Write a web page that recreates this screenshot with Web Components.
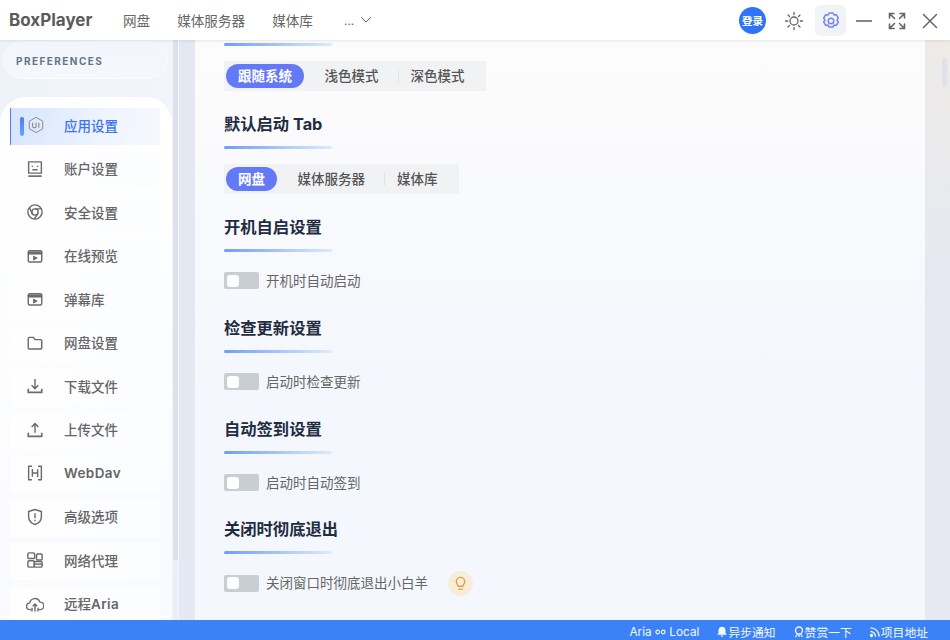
<!DOCTYPE html>
<html lang="zh">
<head>
<meta charset="utf-8">
<title>BoxPlayer</title>
<style>
  html, body { margin: 0; height: 100%; }
  body { font-family: Inter, "Noto Sans CJK SC", sans-serif; overflow: hidden; }
</style>
</head>
<body>
<bp-app></bp-app>
<script>
const ICONS = {
  ui: '<path d="M12 1.800l9 5.100v10.200l-9 5.100-9-5.100V6.900z"/><path d="M7.500 9v4.500a2.300 2.300 0 0 0 4.600 0V9M15.800 9v6.700" stroke-width="1.400"/>',
  account: '<rect x="3.500" y="2.500" width="17" height="15"/><path d="M3 21.500h18" stroke-width="2.200"/><path d="M8.500 7.500v1.800M15.500 7.500v1.800M8.500 13h7"/>',
  security: '<circle cx="12" cy="12" r="9.500"/><circle cx="12" cy="12" r="4.200"/><path d="M12 7.800h9M8.300 14.200L4.500 6M15.700 14.200L11 21.500"/>',
  preview: '<rect x="3" y="5" width="18" height="15" rx="2"/><path d="M3 6.500h18v3H3z" fill="currentColor" stroke-width="1"/><path d="M10 12l5 2.800-5 2.800z" fill="currentColor" stroke-width="1"/>',
  folder: '<path d="M3 6a1.500 1.500 0 0 1 1.500-1.500h5.500l2 3h7.500A1.500 1.500 0 0 1 21 9v9.500a1.500 1.500 0 0 1-1.500 1.500h-15A1.500 1.500 0 0 1 3 18.500z"/>',
  download: '<path d="M12 2.500v12.500M7.500 11l4.500 4.500 4.500-4.500"/><path d="M3 15.500v5h18v-5" stroke-width="2.200"/>',
  upload: '<path d="M12 15.500V3.500M7.500 8L12 3.500 16.500 8"/><path d="M3 15.500v5h18v-5" stroke-width="2.200"/>',
  webdav: '<path d="M8 3H3.500v18H8M16 3h4.500v18H16"/><path d="M8.500 6.500V17M15.500 7v10.500M8.500 12h7"/>',
  shield: '<path d="M12 2l8.500 2.700v7.300c0 5-3.500 8.300-8.500 10-5-1.700-8.500-5-8.500-10V4.700z"/><path d="M12 7v6.500M12 15.800v1.700"/>',
  proxy: '<rect x="2.500" y="2.500" width="9" height="7.500" rx="1.500"/><rect x="14" y="4" width="7.500" height="8" rx="1.500"/><rect x="2.500" y="13" width="8.500" height="8.500" rx="1.500"/><rect x="11" y="14" width="10.500" height="7.500" rx="2"/><path d="M11 17.500h10.500"/>',
  cloud: '<path d="M7 19.500H5.500a4.500 4.500 0 0 1-.5-9A7 7 0 0 1 18.500 9.500a5 5 0 0 1 .5 10h-2"/><path d="M12 22v-10M9 15l3-3 3 3M8 22v-5M16 22v-5"/>'
};

class BpTitlebar extends HTMLElement {
  constructor() {
    super();
    this.attachShadow({ mode: 'open' });
    this.shadowRoot.innerHTML = `
      <style>
        :host { display: flex; align-items: center; height: 40px; background: #fff; padding-left: 9px; color: #666; position: relative; z-index: 2; box-shadow: 0 1px 3px rgba(120,130,150,.18); }
        .logo { font-size: 17px; font-weight: 700; color: #5b5b5b; width: 114px; }
        nav { display: flex; align-items: center; font-size: 13.600px; }
        nav span { margin-right: 27px; white-space: nowrap; }
        nav .more { margin-left: 4px; margin-right: 6px; font-size: 12px; }
        .right { margin-left: auto; display: flex; align-items: center; padding-right: 4px; }
        .login { width: 27px; height: 27px; border-radius: 50%; background: #2f73f6; color: #fff; font-size: 10.500px; font-weight: 700; display: flex; align-items: center; justify-content: center; margin-right: 11px; }
        .btn { width: 33px; height: 31px; display: flex; align-items: center; justify-content: center; margin-top: 1px; }
        .sun { margin-right: 4px; }
        .btn.on { width: 31px; margin: 1px 1px 0; background: #f2f3f7; border-radius: 6px; color: #6f85f6; }
        svg { display: block; fill: none; stroke: currentColor; stroke-linecap: round; }
      </style>
      <span class="logo">BoxPlayer</span>
      <nav>
        <span>网盘</span><span>媒体服务器</span><span>媒体库</span>
        <span class="more">...</span>
        <svg width="12" height="8" viewBox="0 0 12 8" stroke-width="1"><path d="M1.500 1.500L6 6l4.500-4.500"/></svg>
      </nav>
      <div class="right">
        <div class="login">登录</div>
        <div class="btn sun"><svg width="20" height="20" viewBox="0 0 20 20" stroke-width="1.300"><circle cx="10" cy="10" r="4"/><path d="M10 1.500v2.200M10 16.300v2.200M1.500 10h2.200M16.300 10h2.200M4 4l1.500 1.500M14.500 14.500L16 16M4 16l1.500-1.500M14.500 5.500L16 4"/></svg></div>
        <div class="btn on"><svg width="20" height="20" viewBox="0 0 20 20" stroke-width="1.500"><path d="M8 2h4l1 2 2.300-.3 2 3.400-1.300 2 1.300 1.900-2 3.400-2.300-.3-1 2H8l-1-2-2.300.3-2-3.400L4 9.100l-1.300-2 2-3.400L7 4z" stroke-linejoin="round"/><circle cx="10" cy="10" r="2.800"/></svg></div>
        <div class="btn"><svg width="18" height="18" viewBox="0 0 18 18" stroke-width="1.600"><path d="M1 9h16" stroke-linecap="butt"/></svg></div>
        <div class="btn"><svg width="18" height="18" viewBox="0 0 18 18" stroke-width="1.600" stroke-linecap="butt"><path d="M1.500 6V1.500H6M2 2l4.500 4.500M16.500 6V1.500H12M16 2l-4.500 4.500M1.500 12v4.500H6M2 16l4.500-4.500M16.500 12v4.500H12M16 16l-4.500-4.500"/></svg></div>
        <div class="btn"><svg width="18" height="18" viewBox="0 0 18 18" stroke-width="1.500"><path d="M2.500 2.500l13 13M15.500 2.500l-13 13"/></svg></div>
      </div>`;
  }
}

class BpNavItem extends HTMLElement {
  constructor() {
    super();
    this.attachShadow({ mode: 'open' });
  }
  connectedCallback() {
    const icon = this.getAttribute('icon');
    this.shadowRoot.innerHTML = `
      <style>
        :host { display: flex; align-items: center; height: 37px; margin: 0 12px 6.500px 10px; color: #666; font-size: 13.500px; font-weight: 500; box-sizing: border-box; position: relative; background: linear-gradient(90deg, #fefeff, #fcfdff); }
        :host([active]) { color: #3f73ee; background: linear-gradient(100deg, #d6e5fd, #eef4fe 60%, #f6f9fe); border-left: 1px solid #5b7cf5; }
        .bar { display: none; width: 4px; height: 19px; border-radius: 2px; background: linear-gradient(#4f7df5, #66a6fb); position: absolute; left: 9px; top: 9px; }
        :host([active]) .bar { display: block; }
        svg { position: absolute; left: 15.500px; top: 8px; width: 18px; height: 18px; fill: none; stroke: #6b6b6b; stroke-width: 1.900; stroke-linejoin: round; color: #6b6b6b; }
        :host([active]) svg { left: 15.500px; top: 7.500px; stroke: #8a8a8a; stroke-width: 1.300; }
        .label { margin-left: 54px; padding-bottom: 4px; }
        :host([active]) .label { margin-left: 53px; }
        ::slotted(b) { font-weight: 600; letter-spacing: .4px; }
      </style>
      <span class="bar"></span>
      <svg viewBox="0 0 24 24">${ICONS[icon] || ''}</svg>
      <span class="label"><slot></slot></span>`;
  }
}

class BpSidebar extends HTMLElement {
  constructor() {
    super();
    this.attachShadow({ mode: 'open' });
    this.shadowRoot.innerHTML = `
      <style>
        :host { display: block; width: 195px; flex: none; position: relative; overflow: hidden; background: linear-gradient(90deg, #eef2f9, #f2f5fb 90%); }
        .pill { margin: 2px 0 0 3px; width: 165px; height: 37px; box-sizing: border-box; border-radius: 19px; background: linear-gradient(180deg, #f2f5fb, #f6f8fd); border: 1px solid #f9fbff; color: #64748b; font-size: 10px; font-weight: 700; letter-spacing: 1.450px; display: flex; align-items: center; padding-left: 12px; }
        .card { margin-top: 18px; width: 172px; border-radius: 26px 26px 0 0; background: linear-gradient(180deg, #fff, #f8fafe); padding-top: 11px; height: 560px; box-sizing: border-box; }
        .track { position: absolute; left: 173px; top: 0; bottom: 0; width: 5px; background: #eceef5; }
        .thumb { position: absolute; left: 173px; top: 0; height: 520px; width: 5px; background: #dee1e9; }
        .gutter { position: absolute; left: 179px; top: 0; bottom: 0; width: 16px; background: #e3e8f2; }
      </style>
      <div class="pill">PREFERENCES</div>
      <div class="card"><slot></slot></div>
      <div class="track"></div><div class="thumb"></div><div class="gutter"></div>`;
  }
}

class BpSegment extends HTMLElement {
  constructor() {
    super();
    this.attachShadow({ mode: 'open' });
  }
  connectedCallback() {
    const items = this.getAttribute('items').split(',');
    this.shadowRoot.innerHTML = `
      <style>
        :host { display: flex; width: fit-content; align-items: center; height: 30px; background: #f1f2f4; padding: 0 2px; color: #555; font-size: 13.500px; font-weight: 500; }
        span { box-sizing: border-box; height: 24.500px; display: flex; align-items: center; white-space: nowrap; position: relative; padding: 0 19px 2px 13px; }
        .pill { background: #6479f5; color: #fff; border-radius: 13px; font-weight: 700; padding: 0 12px 2px; margin-right: 8px; }
        .pill + span { padding-left: 12.500px; }
        span + span + span::before { content: ""; position: absolute; left: 0; top: 6px; height: 13px; width: 1px; background: #e2e3e6; }
      </style>
      ${items.map((t, i) => `<span${i === 0 ? ' class="pill"' : ''}>${t}</span>`).join('')}`;
  }
}

class BpSwitch extends HTMLElement {
  constructor() {
    super();
    this.attachShadow({ mode: 'open' });
    this.shadowRoot.innerHTML = `
      <style>
        :host { display: flex; align-items: center; height: 28px; color: #666; font-size: 13.500px; }
        .sw { width: 35px; height: 17px; border-radius: 2px; background: #c9cdd4; position: relative; margin-right: 7px; flex: none; }
        .sw::after { content: ""; position: absolute; left: 3px; top: 2.500px; width: 12px; height: 12px; border-radius: 3px; background: #fff; }
        .t { padding-bottom: 2px; }
        .extra { margin-left: 20px; display: flex; }
      </style>
      <span class="sw"></span><span class="t"><slot name="label"></slot></span><span class="extra"><slot></slot></span>`;
  }
}

class BpSection extends HTMLElement {
  constructor() {
    super();
    this.attachShadow({ mode: 'open' });
  }
  connectedCallback() {
    this.shadowRoot.innerHTML = `
      <style>
        :host { display: block; margin-bottom: 21.900px; }
        h3 { margin: 0; font-size: 16.300px; line-height: 22px; font-weight: 700; color: #222c40; }
        .rule { height: 3px; width: 108px; border-radius: 2px; background: linear-gradient(90deg, #6f9ff5, #dcebfd); margin: 11px 0 15px; }
        :host([flush]) h3 { display: none; }
        :host([flush]) .rule { margin-top: 0; }
      </style>
      <h3>${this.getAttribute('title') || ''}</h3>
      <div class="rule"></div>
      <slot></slot>`;
  }
}

class BpStatusbar extends HTMLElement {
  constructor() {
    super();
    this.attachShadow({ mode: 'open' });
    this.shadowRoot.innerHTML = `
      <style>
        :host { display: flex; justify-content: flex-end; align-items: center; height: 20px; box-sizing: border-box; padding: 3px 22px 0 0; background: #3b82f6; color: #f4f8ff; font-size: 11.800px; position: relative; z-index: 2; }
        span { display: flex; align-items: center; margin-left: 17px; white-space: nowrap; }
        svg { width: 12px; height: 12px; display: block; fill: none; stroke: currentColor; }
      </style>
      <span>Aria&nbsp;<svg viewBox="0 0 12 12" stroke-width="1.200" style="width:11px"><circle cx="3" cy="6" r="2"/><circle cx="9" cy="6" r="2"/></svg>&nbsp;Local</span>
      <span><svg viewBox="0 0 12 12" style="fill:currentColor;stroke:none"><path d="M6 .800c2.200 0 3.500 1.700 3.500 3.700v2.500l1.300 1.700H1.200L2.500 7V4.500C2.500 2.500 3.800.800 6 .800zM4.700 9.500h2.600a1.300 1.300 0 0 1-2.600 0z"/></svg>异步通知</span>
      <span><svg viewBox="0 0 12 12" stroke-width="1.300"><circle cx="6" cy="4.500" r="3.500"/><path d="M2.500 11l2-3M9.500 11l-2-3M6 8v3"/></svg>赞赏一下</span>
      <span><svg viewBox="0 0 12 12" stroke-width="1.300"><path d="M1.500 1.800a8.700 8.700 0 0 1 8.700 8.700M1.500 5.500a5 5 0 0 1 5 5"/><circle cx="2.500" cy="9.500" r="1" fill="currentColor"/></svg>项目地址</span>`;
  }
}

class BpSettings extends HTMLElement {
  constructor() {
    super();
    this.attachShadow({ mode: 'open' });
    this.shadowRoot.innerHTML = `
      <style>
        :host { display: block; flex: none; width: 730px; box-sizing: border-box; padding: 3px 0 0 29px; background: linear-gradient(180deg, #fdfcfc, #f4f7fd 60%); overflow: hidden; }
        .tip { width: 25px; height: 25px; border-radius: 50%; background: #f8edd9; display: flex; align-items: center; justify-content: center; }
        .tip svg { width: 15px; height: 15px; fill: none; stroke: #d9a04d; stroke-width: 1.500; stroke-linecap: round; }
      </style>
      <bp-section flush><bp-segment items="跟随系统,浅色模式,深色模式"></bp-segment></bp-section>
      <bp-section title="默认启动 Tab"><bp-segment items="网盘,媒体服务器,媒体库"></bp-segment></bp-section>
      <bp-section title="开机自启设置"><bp-switch><span slot="label">开机时自动启动</span></bp-switch></bp-section>
      <bp-section title="检查更新设置"><bp-switch><span slot="label">启动时检查更新</span></bp-switch></bp-section>
      <bp-section title="自动签到设置"><bp-switch><span slot="label">启动时自动签到</span></bp-switch></bp-section>
      <bp-section title="关闭时彻底退出"><bp-switch><span slot="label">关闭窗口时彻底退出小白羊</span>
        <span class="tip"><svg viewBox="0 0 16 16"><path d="M5.500 11c0-1.500-2-2.500-2-5a4.500 4.500 0 0 1 9 0c0 2.500-2 3.500-2 5z"/><path d="M6 14h4"/></svg></span>
      </bp-switch></bp-section>`;
  }
}

class BpApp extends HTMLElement {
  constructor() {
    super();
    this.attachShadow({ mode: 'open' });
    const nav = [
      ['ui', '应用设置'], ['account', '账户设置'], ['security', '安全设置'], ['preview', '在线预览'],
      ['preview', '弹幕库'], ['folder', '网盘设置'], ['download', '下载文件'], ['upload', '上传文件'],
      ['webdav', '<b>WebDav</b>'], ['shield', '高级选项'], ['proxy', '网络代理'], ['cloud', '远程<b>Aria</b>']
    ];
    this.shadowRoot.innerHTML = `
      <style>
        :host { display: flex; flex-direction: column; height: 640px; width: 950px; overflow: hidden; }
        .main { flex: 1; min-height: 0; display: flex; }
        .right { flex: 1; position: relative; background: linear-gradient(180deg, #eeebe7, #e6e9f1 40%); }
        .thumb { position: absolute; left: 17px; top: 18px; width: 5px; height: 29px; border-radius: 3px; background: #dfe2ee; }
      </style>
      <bp-titlebar></bp-titlebar>
      <div class="main">
        <bp-sidebar>
          ${nav.map((n, i) => `<bp-nav-item icon="${n[0]}"${i === 0 ? ' active' : ''}>${n[1]}</bp-nav-item>`).join('')}
        </bp-sidebar>
        <bp-settings></bp-settings>
        <div class="right"><div class="thumb"></div></div>
      </div>
      <bp-statusbar></bp-statusbar>`;
  }
}

customElements.define('bp-titlebar', BpTitlebar);
customElements.define('bp-nav-item', BpNavItem);
customElements.define('bp-sidebar', BpSidebar);
customElements.define('bp-segment', BpSegment);
customElements.define('bp-switch', BpSwitch);
customElements.define('bp-section', BpSection);
customElements.define('bp-statusbar', BpStatusbar);
customElements.define('bp-settings', BpSettings);
customElements.define('bp-app', BpApp);
</script>
</body>
</html>
